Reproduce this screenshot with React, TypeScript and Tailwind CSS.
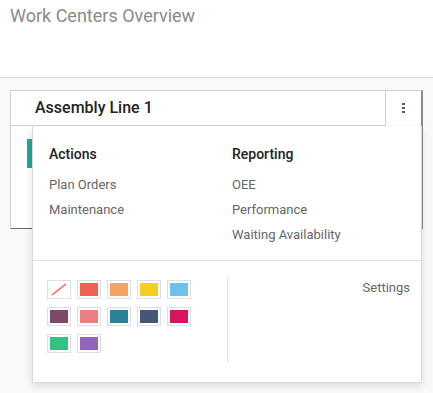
import React from "react";

const colors = [
  "#f06050",
  "#f4a460",
  "#f7cd1f",
  "#6cc1ed",
  "#814968",
  "#eb7e7f",
  "#2c8397",
  "#475577",
  "#d6145f",
  "#30c381",
  "#9365b8",
];

export default function App() {
  return (
    <div
      className="relative w-[433px] h-[393px] overflow-hidden bg-white"
      style={{ fontFamily: "Roboto, 'Noto Sans', sans-serif" }}
    >
      <div className="h-[77px] bg-white px-[10px] pt-[4px]">
        <div className="text-[18px] leading-[24px] text-[#8a8a8a]">Work Centers Overview</div>
      </div>
      <div className="h-[316px] border-t border-[#d8d8d8] bg-[#f9f9f9] pl-[10px] pt-[12px]">
        <div className="relative w-[413px] h-[139px] bg-white border-l border-t border-[#d0d0d8] border-r-2 border-r-[#8a8a8a] border-b border-b-[#666]">
          <div className="flex">
            <div className="w-[375px] h-[35px] border-r border-b border-[#d0d0d8] pl-[24px] flex items-center">
              <span className="text-[16px] font-medium text-[#222]">Assembly Line 1</span>
            </div>
            <div className="flex-1 flex justify-center pt-[12px]">
              <div className="flex flex-col gap-[2px]">
                <span className="block w-[3px] h-[2px] bg-[#4a5a78]" />
                <span className="block w-[3px] h-[2px] bg-[#4a5a78]" />
                <span className="block w-[3px] h-[2px] bg-[#4a5a78]" />
              </div>
            </div>
          </div>
          <div className="ml-[16px] mt-[13px] w-[6px] h-[29px] bg-[#26a69a]" />
        </div>
      </div>

      <div className="absolute left-[32px] top-[126px] w-[390px] h-[257px] bg-white border-l border-r border-b border-[#dadada] shadow-[0_3px_8px_rgba(0,0,0,0.12)]">
        <div className="flex pl-[16px] pt-[18px] pb-[13px] border-b border-[#e2e2e2]">
          <div className="w-[183px]">
            <div className="text-[14px] leading-[20px] font-medium text-[#222]">Actions</div>
            <div className="mt-[8px] text-[13px] text-[#666]">
              <div className="h-[25px] leading-[25px]">Plan Orders</div>
              <div className="h-[25px] leading-[25px]">Maintenance</div>
            </div>
          </div>
          <div className="flex-1">
            <div className="text-[14px] leading-[20px] font-medium text-[#222]">Reporting</div>
            <div className="mt-[8px] text-[13px] text-[#666]">
              <div className="h-[25px] leading-[25px]">OEE</div>
              <div className="h-[25px] leading-[25px]">Performance</div>
              <div className="h-[25px] leading-[25px]">Waiting Availability</div>
            </div>
          </div>
        </div>
        <div className="flex">
          <div className="w-[195px] mt-[15px] h-[87px] border-r border-[#e2e2e2] pl-[14px] pt-[4px]">
            <div className="grid grid-cols-[repeat(5,24px)] gap-x-[6px] gap-y-[8px]">
              <div className="w-[24px] h-[19px] border border-[#dcdfe4] p-[2px]">
                <svg width="18" height="13" viewBox="0 0 18 13" className="block">
                  <line x1="2" y1="12" x2="16" y2="1" stroke="#f06050" strokeWidth="1.5" />
                </svg>
              </div>
              {colors.map((c) => (
                <div key={c} className="w-[24px] h-[19px] border border-[#dcdfe4] p-[2px]">
                  <div className="w-full h-full" style={{ backgroundColor: c }} />
                </div>
              ))}
            </div>
          </div>
          <div className="flex-1 flex justify-end pr-[11px] pt-[17px]">
            <span className="text-[13px] leading-[20px] text-[#666]">Settings</span>
          </div>
        </div>
      </div>
    </div>
  );
}
